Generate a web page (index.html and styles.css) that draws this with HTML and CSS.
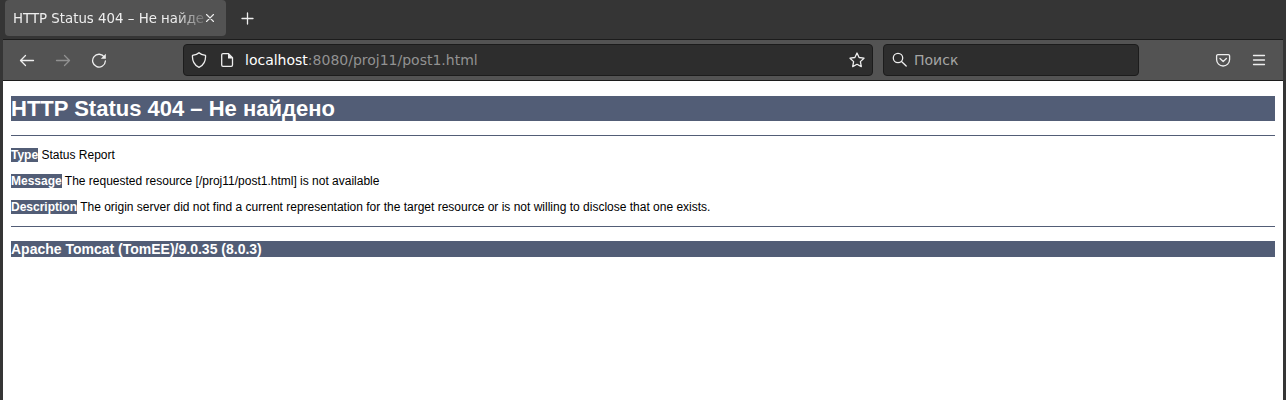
FILE: index.html
```html
<!DOCTYPE html>
<html lang="ru">
<head>
<meta charset="utf-8">
<title>HTTP Status 404 – Не найдено</title>
<link rel="stylesheet" href="styles.css">
</head>
<body>
<div class="window">
  <div class="tabs">
    <div class="tab">
      <span class="tab-title">HTTP Status 404 – Не найдено</span>
      <svg class="close" width="10" height="10" viewBox="0 0 10 10"><path d="M1.500 1.500l7 7M8.500 1.500l-7 7"/></svg>
    </div>
    <svg class="new-tab" width="14" height="14" viewBox="0 0 14 14"><path d="M6.500 1v11M1 6.500h11"/></svg>
  </div>
  <div class="toolbar">
    <div class="nav">
      <svg width="16" height="16" viewBox="0 0 16 16"><path d="M14.500 8.500H1.500M6.500 3.500l-5 5 5 5"/></svg>
      <svg class="disabled" width="16" height="16" viewBox="0 0 16 16"><path d="M1.500 8.500h13M9.500 3.500l5 5-5 5"/></svg>
      <svg width="16" height="16" viewBox="0 0 16 16"><path d="M13.400 5.200A6.400 6.400 0 1 0 14.400 9"/><path class="solid" d="M14.800 1.800v5H9.800z"/></svg>
    </div>
    <div class="field address">
      <svg width="16" height="16" viewBox="0 0 16 16"><path d="M8 .8C6.600 2.200 4 3 1.500 3.400 1 8.500 3.500 13.500 8 15.300c4.500-1.800 7-6.800 6.500-11.900C12 3 9.400 2.200 8 .8z"/></svg>
      <svg class="page-icon" width="16" height="16" viewBox="0 0 16 16"><path d="M4 1.700h5.500l4 4V13a1.300 1.300 0 0 1-1.300 1.300H4A1.300 1.300 0 0 1 2.700 13V3A1.300 1.300 0 0 1 4 1.700z"/><path class="solid" d="M9 1.500v5h5z"/></svg>
      <span class="url"><b>localhost</b>:8080/proj11/post1.html</span>
      <svg width="16" height="16" viewBox="0 0 16 16"><path d="M8 1l2.100 4.500 4.900.7-3.600 3.400.9 5L8 12.300l-4.300 2.300.9-5L1 6.200l4.900-.7z"/></svg>
    </div>
    <div class="field search">
      <svg width="16" height="16" viewBox="0 0 16 16"><circle cx="6" cy="6" r="4.700"/><path d="M9.500 9.500l4.700 4.500"/></svg>
      <span>Поиск</span>
    </div>
    <div class="tools">
      <svg width="16" height="16" viewBox="0 0 16 16"><path d="M3 2.700h10.300a1.300 1.300 0 0 1 1.300 1.300v3.500a6.500 6.500 0 0 1-13 0V4A1.300 1.300 0 0 1 3 2.700z"/><path d="M5 6.500l3.200 3 3.200-3"/></svg>
      <svg width="16" height="16" viewBox="0 0 16 16"><path d="M2.500 3.500h11M2.500 8h11M2.500 12.500h11"/></svg>
    </div>
  </div>
  <main class="page">
    <h1>HTTP Status 404 – Не найдено</h1>
    <hr>
    <p><b>Type</b> Status Report</p>
    <p><b>Message</b> The requested resource [/proj11/post1.html] is not available</p>
    <p><b>Description</b> The origin server did not find a current representation for the target resource or is not willing to disclose that one exists.</p>
    <hr>
    <h3>Apache Tomcat (TomEE)/9.0.35 (8.0.3)</h3>
  </main>
</div>
</body>
</html>
```
FILE: styles.css
```css
* { box-sizing: border-box; }
body { margin: 0; background: #353535; }
.window { height: 400px; padding: 0 3px; overflow: hidden; display: flex; flex-direction: column; }
svg { flex: none; fill: none; stroke: #eee; stroke-width: 1.3; stroke-linecap: round; stroke-linejoin: round; }
.solid { fill: #eee; stroke: none; }

.tabs { height: 39px; flex: none; display: flex; align-items: flex-start; padding-left: 2px; }
.tab { width: 221px; height: 36px; background: #535353; border-radius: 4px; display: flex; align-items: center; padding: 0 11px 0 8px; }
.tab-title { width: 192px; padding-top: 1px; overflow: hidden; white-space: nowrap; font: 13.330px/20px "DejaVu Sans", sans-serif; color: #eee; -webkit-mask-image: linear-gradient(to right, #000 162px, transparent 198px); mask-image: linear-gradient(to right, #000 162px, transparent 198px); }
.close { stroke-width: 1.1; }
.new-tab { margin: 12px 0 0 15px; stroke-width: 1.3; }

.toolbar { height: 42px; flex: none; background: #535353; border-top: 1px solid #1c1c1c; border-bottom: 1px solid #1c1c1c; display: flex; align-items: center; }
.nav { width: 180px; display: flex; gap: 20px; padding-left: 16px; }
.disabled { opacity: .4; }
.field { height: 32px; background: #2d2d2d; border: 1px solid #1c1c1c; border-radius: 4px; display: flex; align-items: center; font: 14px/20px "DejaVu Sans", sans-serif; color: #a5a5a5; }
.address { width: 690px; padding: 0 7px; }
.page-icon { margin-left: 12px; }
.url { flex: 1; margin-left: 10px; color: #929292; }
.url b { font-weight: normal; color: #fff; }
.search { width: 256px; margin-left: 10px; padding-left: 8px; gap: 6px; }
.tools { margin-left: auto; padding-right: 16px; display: flex; gap: 20px; }

.page { flex: 1; background: #fff; padding: 15px 8px 0; font: 12px/14px "Liberation Sans", Arial, sans-serif; color: #000; }
.page h1, .page h3, .page p b { background: #525d76; color: #fff; }
.page h1 { margin: 0 0 14px; font-size: 22px; line-height: 25px; }
.page hr { height: 1px; margin: 0; border: 0; background: #525d76; }
.page p { margin: 12px 0; }
.page h3 { margin: 14px 0 0; font-size: 14px; line-height: 16px; }
```
